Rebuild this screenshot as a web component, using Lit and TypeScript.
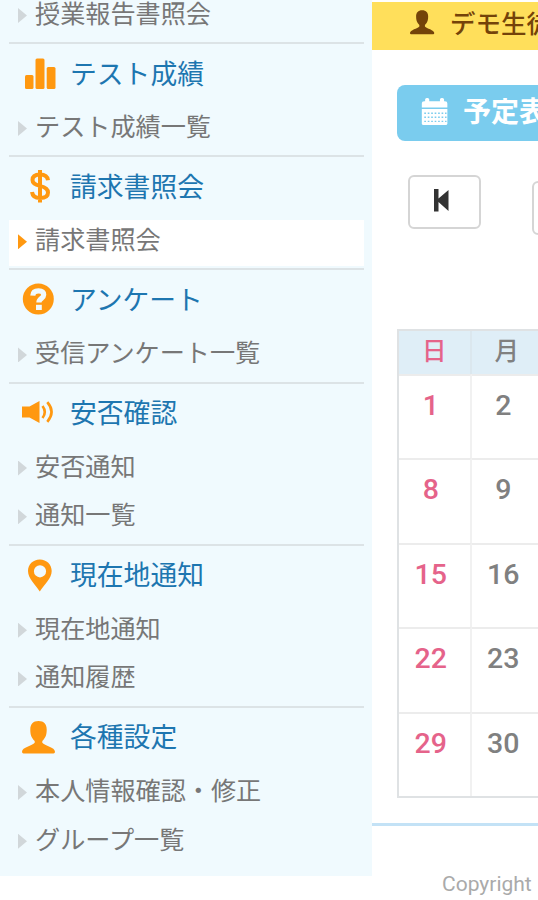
import { LitElement, html, svg, css } from "lit";
import { customElement, property } from "lit/decorators.js";

const icons: Record<string, unknown> = {
  chart: svg`<rect x="3" y="18" width="8.500" height="14" rx="1.500"/><rect x="13.500" y="1.500" width="9" height="30.500" rx="1.500"/><rect x="24.700" y="10" width="8.800" height="22" rx="1.500"/>`,
  dollar: svg`<path d="M18 0v32.500M26 10.200C25.500 6 22.500 4.400 18 4.400c-5 0-7.500 2.200-7.500 5.500 0 3.700 3 4.900 7.500 6 5 1.200 8 2.700 8 6.500 0 3.600-3 5.500-8 5.500-5 0-7.500-1.800-8-6" fill="none" stroke="currentColor" stroke-width="4"/>`,
  question: svg`<circle cx="16.300" cy="16" r="15.500"/><path d="M10.800 12.700c.2-3.800 2.300-4.900 5.700-4.900 3.300 0 5.200 1.400 5.200 4 0 3.800-4.800 3.400-4.800 7.800" fill="none" stroke="#f0fafe" stroke-width="5.200"/><rect x="14" y="21.800" width="5.800" height="5.200" fill="#f0fafe"/>`,
  sound: svg`<path d="M0 9.500h7.500L17.500 4v22L7.500 20.500H0z"/><path d="M20.500 9q4.600 6 0 12M25.300 5.200q8.500 9.800 0 19.600" fill="none" stroke="currentColor" stroke-width="2.600"/>`,
  pin: svg`<path fill-rule="evenodd" d="M17.800 0.500C11 .5 6 5.500 6 12c0 7.500 7.500 13.500 11.800 20.500C22 25.500 29.700 19.500 29.700 12 29.700 5.500 24.700.5 17.800.5zm.2 5.700a6.100 6.100 0 1 1 0 12.200 6.100 6.100 0 0 1 0-12.200z"/>`,
  user: svg`<path d="M16.500 0C11 0 8.300 3.200 8.300 8.500c0 4.500.7 8 4.400 11.500v1.800C10.500 24.500 0 26.500 0 30.700q0 1.800 1.500 1.800h30q1.500 0 1.500-1.800c0-4.200-10.500-6.200-12.700-8.900V20c3.700-3.500 4.400-7 4.400-11.500C24.700 3.200 22 0 16.500 0z"/>`,
  calendar: svg`<path d="M1 11.500V7c0-2 1-3 3-3h1V2q0-2 2-2h1q2 0 2 2v2h13V2q0-2 2-2h1q2 0 2 2v2h1c2 0 3 1 3 3v4.500z"/><path d="M1 13.500h31V31q0 2-2 2H3q-2 0-2-2z"/><path d="M4 18.500h27M4 23.500h27M4 28.500h27" stroke="#7accee" stroke-width="1.800" stroke-dasharray="2 2.200"/>`,
  first: svg`<path d="M0 0h4.500v9.500L14.500 1v21L4.500 13v9.500H0z"/>`,
};

@customElement("ui-icon")
class UiIcon extends LitElement {
  @property() name = "user";
  @property() box = "0 0 34 33";
  static styles = css`
    :host { display: block; flex: none; }
    svg { display: block; width: 100%; height: 100%; fill: currentColor; overflow: visible; }
  `;
  render() {
    return html`<svg viewBox=${this.box}>${icons[this.name]}</svg>`;
  }
}

interface Section {
  icon: string;
  title: string;
  items: string[];
  active?: boolean;
}

const sections: Section[] = [
  { icon: "chart", title: "テスト成績", items: ["テスト成績一覧"] },
  { icon: "dollar", title: "請求書照会", items: ["請求書照会"], active: true },
  { icon: "question", title: "アンケート", items: ["受信アンケート一覧"] },
  { icon: "sound", title: "安否確認", items: ["安否通知", "通知一覧"] },
  { icon: "pin", title: "現在地通知", items: ["現在地通知", "通知履歴"] },
  { icon: "user", title: "各種設定", items: ["本人情報確認・修正", "グループ一覧"] },
];

const weeks = [[1, 2], [8, 9], [15, 16], [22, 23], [29, 30]];

@customElement("app-root")
class AppRoot extends LitElement {
  static styles = css`
    :host {
      display: flex;
      align-items: flex-start;
      width: 538px;
      height: 900px;
      overflow: hidden;
      background: #fff;
      font-family: Roboto, "Noto Sans CJK JP", sans-serif;
      white-space: nowrap;
    }
    * { box-sizing: border-box; }
    nav {
      flex: none;
      width: 372px;
      height: 876px;
      padding: 0 8px 0 9px;
      background: #f0fafe;
      overflow: hidden;
    }
    .lead { height: 42px; display: flex; flex-direction: column; justify-content: flex-end; }
    .lead .item { margin-bottom: 2px; }
    .section { border-top: 2px solid #dce3e6; height: 113.2px; }
    .section.double { height: 162.2px; }
    .title {
      display: flex;
      align-items: center;
      height: 63px;
      padding: 0 0 4px 13px;
      color: #1d76b0;
      font-size: 26.8px;
      line-height: 40px;
    }
    .title ui-icon { width: 34px; height: 33px; margin-right: 14px; color: #ff9810; }
    .title span { margin-top: 2px; }
    .item {
      display: flex;
      align-items: center;
      flex: none;
      height: 46px;
      margin-bottom: 2.7px;
      padding: 0 0 4px 9px;
      color: #777;
      font-size: 25.15px;
      line-height: 38px;
    }
    .item::before {
      content: "";
      width: 9px;
      height: 15px;
      margin: 1px 8px 0 0;
      background: #d1d7da;
      clip-path: polygon(0 0, 100% 50%, 0 100%);
    }
    .item.active { background: #fff; }
    .item.active::before { background: #ff9810; }
    main { flex: none; width: 200px; padding-top: 2px; }
    .account {
      display: flex;
      align-items: center;
      height: 48px;
      padding-left: 38px;
      background: #ffdf5b;
      color: #744309;
      font-size: 25.5px;
      font-weight: 500;
    }
    .account ui-icon { width: 25px; height: 25px; margin: -7px 15px 0 0; }
    .account span { margin-top: -9px; }
    .banner {
      display: flex;
      align-items: center;
      height: 56px;
      margin: 35px 0 34px 25px;
      padding-left: 24px;
      border-radius: 8px;
      background: #7accee;
      color: #fff;
      font-size: 28px;
      font-weight: 700;
    }
    .banner ui-icon { width: 28px; height: 29px; margin: -4px 14px 0 0; }
    .banner span { margin-top: -6px; }
    .controls { display: flex; gap: 51px; padding-left: 36px; height: 154px; }
    .button {
      display: flex;
      flex: none;
      align-items: center;
      justify-content: center;
      width: 73px;
      height: 54px;
      padding: 0 6px 4px 0;
      border: 2px solid #d5d5d5;
      border-radius: 6px;
      color: #333;
    }
    .button ui-icon { width: 15px; height: 22px; }
    .button.next { margin-top: 6px; }
    .calendar {
      width: 180px;
      height: 469px;
      margin-left: 25px;
      border: 2px solid #dfe2e4;
      font-weight: 500;
      color: #808080;
    }
    .row { display: grid; grid-template-columns: 72.5px 72.5px 30px; height: 84.5px; }
    .row > div { border-right: 2px solid #f1f1f1; border-top: 2px solid #ececec; padding: 13px 7px 0 0; text-align: center; font-size: 28.5px; line-height: 34px; }
    .row.head { height: 42.5px; background: #dfeef7; }
    .row.head > div { border-top: 0; border-right-color: #dbe7ee; padding: 0; font-size: 24.5px; line-height: 41px; }
    .row > .sunday { color: #e5638a; }
    footer {
      margin-top: 25px;
      border-top: 3px solid #c3e2f6;
      padding: 45px 0 0 70px;
      color: #aaa;
      font-size: 21px;
      line-height: 26px;
    }
  `;

  renderSection(section: Section) {
    return html`
      <section class="section ${section.items.length > 1 ? "double" : ""}">
        <div class="title"><ui-icon name=${section.icon}></ui-icon><span>${section.title}</span></div>
        ${section.items.map((item) => html`<div class="item ${section.active ? "active" : ""}">${item}</div>`)}
      </section>`;
  }

  render() {
    return html`
      <nav>
        <div class="lead"><div class="item">授業報告書照会</div></div>
        ${sections.map((section) => this.renderSection(section))}
      </nav>
      <main>
        <div class="account"><ui-icon name="user"></ui-icon><span>デモ生徒</span></div>
        <div class="banner"><ui-icon name="calendar"></ui-icon><span>予定表</span></div>
        <div class="controls">
          <div class="button"><ui-icon name="first" box="0 0 15 22"></ui-icon></div>
          <div class="button next"></div>
        </div>
        <div class="calendar">
          <div class="row head"><div class="sunday">日</div><div>月</div><div></div></div>
          ${weeks.map((week) => html`
            <div class="row"><div class="sunday">${week[0]}</div><div>${week[1]}</div><div></div></div>`)}
        </div>
        <footer>Copyright</footer>
      </main>`;
  }
}
